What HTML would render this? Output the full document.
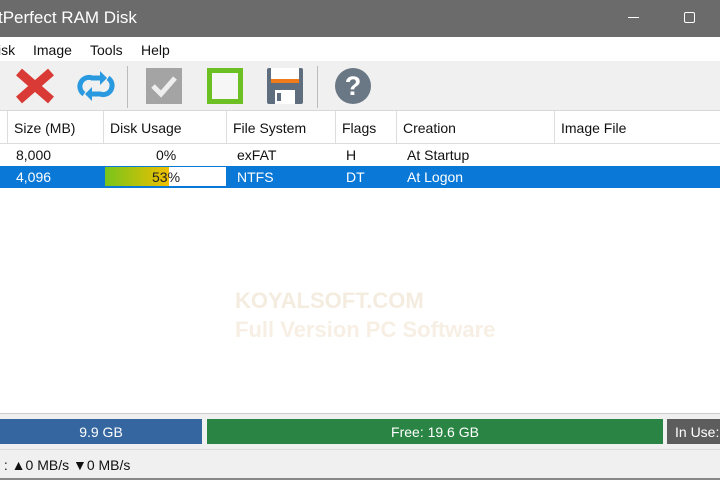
<!DOCTYPE html><html><head><style>
body{margin:0;width:720px;height:480px;overflow:hidden;font-family:"Liberation Sans",sans-serif;background:#fff;position:relative;font-size:14px;color:#111}
.a{position:absolute}
.t{background:#6b6b6b;left:0;top:0;width:720px;height:37px;color:#fff;font-size:17px}
.m{top:37px;height:24px;width:720px;background:#fff}
.tb{top:61px;height:49px;width:720px;background:#f0f0f0;border-bottom:1px solid #d8d8d8}
.h{top:111px;height:32px;width:720px;background:#fff;border-bottom:1px solid #ddd}
.hc{position:absolute;top:0;height:32px;line-height:34px;border-right:1px solid #ddd;padding-left:6px;box-sizing:border-box}
.sep{position:absolute;top:5px;width:1px;height:42px;background:#bbb}
</style></head><body>
<div class="a t"><span class="a" style="left:-2px;top:8px">tPerfect RAM Disk</span>
<span class="a" style="left:628px;top:17px;width:11px;height:1px;background:#fff"></span>
<span class="a" style="left:684px;top:12px;width:9px;height:9px;border:1px solid #fff;border-radius:2px"></span></div>
<div class="a m"><span class="a" style="left:-2px;top:5px">isk</span><span class="a" style="left:33px;top:5px">Image</span><span class="a" style="left:90px;top:5px">Tools</span><span class="a" style="left:141px;top:5px">Help</span></div>
<div class="a tb">
<svg class="a" style="left:15px;top:7px" width="40" height="36" viewBox="0 0 40 36"><path d="M4 4L36 32M36 4L4 32" stroke="#d93a35" stroke-width="9"/></svg>
<svg class="a" style="left:74px;top:7px" width="44" height="36" viewBox="0 0 44 36"><path d="M10 26A9 9 0 0 1 18 10H28M34 10A9 9 0 0 1 26 26H16" stroke="#2a9ae0" stroke-width="5" fill="none"/><path d="M26 3L33 10L26 17ZM18 19L11 26L18 33Z" fill="#2a9ae0"/></svg>
<div class="sep" style="left:127px"></div>
<svg class="a" style="left:146px;top:7px" width="36" height="36"><rect width="36" height="36" fill="#a4a4a4"/><path d="M7 18L15 26L29 10" stroke="#eee" stroke-width="5" fill="none"/></svg>
<div class="a" style="left:207px;top:7px;width:26px;height:26px;border:5px solid #6cc023;background:#f6f6f6"></div>
<svg class="a" style="left:267px;top:7px" width="36" height="36"><rect width="36" height="36" rx="2" fill="#5e6e7e"/><rect x="4" y="0" width="28" height="14" fill="#fff"/><rect x="4" y="11" width="28" height="4" fill="#f07b1a"/><rect x="8" y="22" width="20" height="14" fill="#fff"/><rect x="10" y="25" width="4" height="8" fill="#5e6e7e"/></svg>
<div class="sep" style="left:317px"></div>
<div class="a" style="left:335px;top:7px;width:36px;height:36px;border-radius:50%;background:#6a7784;color:#fff;font-weight:bold;font-size:27px;text-align:center;line-height:36px">?</div>
</div>
<div class="a h">
<div class="hc" style="left:0;width:8px"></div>
<div class="hc" style="left:8px;width:96px">Size (MB)</div>
<div class="hc" style="left:104px;width:123px">Disk Usage</div>
<div class="hc" style="left:227px;width:109px">File System</div>
<div class="hc" style="left:336px;width:61px">Flags</div>
<div class="hc" style="left:397px;width:158px">Creation</div>
<div class="hc" style="left:555px;width:165px;border:0">Image File</div>
</div>
<div class="a" style="top:144px;height:22px;width:720px;line-height:22px">
<span class="a" style="left:16px">8,000</span><span class="a" style="left:156px">0%</span><span class="a" style="left:237px">exFAT</span><span class="a" style="left:346px">H</span><span class="a" style="left:407px">At Startup</span></div>
<div class="a" style="top:166px;height:22px;width:720px;line-height:22px;background:#0a78d7;color:#fff">
<span class="a" style="left:16px">4,096</span>
<div class="a" style="left:105px;top:1px;width:121px;height:19px;background:#fff"><div style="width:64px;height:19px;background:linear-gradient(90deg,#77c41c,#f0c000)"></div></div>
<span class="a" style="left:152px;color:#222">53%</span><span class="a" style="left:237px">NTFS</span><span class="a" style="left:346px">DT</span><span class="a" style="left:407px">At Logon</span></div>
<div class="a" style="left:235px;top:288px;color:#f5ece0;font-size:22px;font-weight:bold">KOYALSOFT.COM</div>
<div class="a" style="left:235px;top:317px;color:#f7efe4;font-size:22px;font-weight:bold">Full Version PC Software</div>
<div class="a" style="top:413px;width:720px;height:35px;background:#f0f0f0;border-top:1px solid #ccc"></div>
<div class="a" style="left:0;top:419px;width:202px;height:25px;background:#3566a0;color:#fff;text-align:center;line-height:26px">9.9 GB</div>
<div class="a" style="left:207px;top:419px;width:456px;height:25px;background:#2a8443;color:#fff;text-align:center;line-height:26px">Free: 19.6 GB</div>
<div class="a" style="left:667px;top:419px;width:60px;height:25px;background:#5d5d5d;color:#fff;line-height:26px;padding-left:8px">In Use:</div>
<div class="a" style="top:449px;width:720px;height:31px;background:#f0f0f0;border-top:1px solid #ddd;line-height:31px;border-bottom:2px solid #888;box-sizing:border-box">&nbsp;: ▲0 MB/s ▼0 MB/s</div>
</body></html>
